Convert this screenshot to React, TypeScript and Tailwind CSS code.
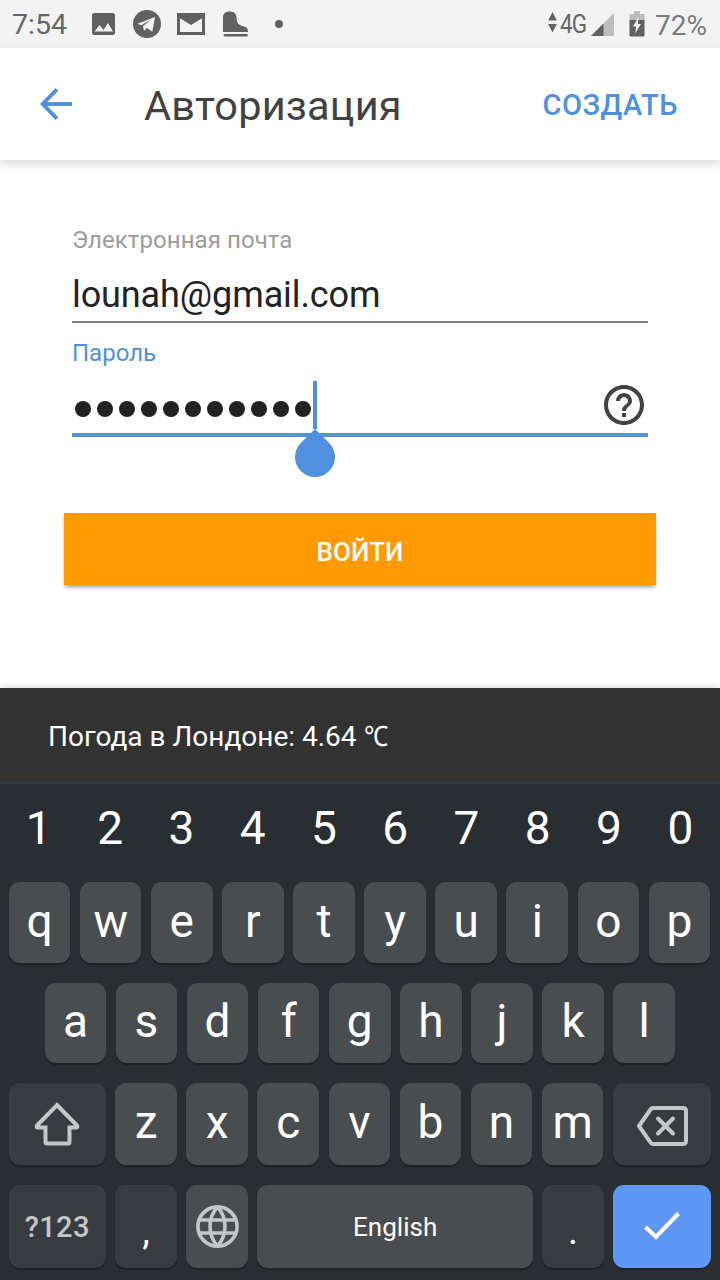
import type { ReactNode } from "react";

const digits = "1234567890".split("");
const topRow = "qwertyuiop".split("");
const homeRow = "asdfghjkl".split("");
const bottomRow = "zxcvbnm".split("");
const passwordLength = 11;

const rowClass = "flex gap-[9.5px] px-[8.8px]";

function Key({ children, className = "" }: { children: ReactNode; className?: string }) {
  return (
    <div
      className={`flex h-full items-center justify-center rounded-[11px] text-[46px] leading-none text-white shadow-[0_2px_1px_#1e2326] ${className}`}
    >
      {children}
    </div>
  );
}

function LetterKey({ letter }: { letter: string }) {
  return <Key className="w-[61.6px] shrink-0 bg-[#4a4d4f] pb-[3px]">{letter}</Key>;
}

function StatusBar() {
  return (
    <div className="flex h-12 items-center bg-[#f3f3f3] text-[#666]">
      <span className="ml-3 w-[79px] pt-[3px] text-[28.5px] leading-none">7:54</span>
      <svg className="ml-[1px] h-6 w-6 shrink-0" viewBox="0 0 24 24">
        <rect x="0" y="1" width="23" height="22" rx="2.5" fill="#616161" />
        <path d="M2.500 19.500l5-6.500 4 5 4.500-7 5 8.500z" fill="#f3f3f3" />
      </svg>
      <svg className="ml-[17px] h-7 w-7 shrink-0" viewBox="0 0 28 28">
        <circle cx="14" cy="14" r="14" fill="#616161" />
        <path d="M4.500 13.800L22 7 19.300 21.800 14 18 11 20.800 9.900 16.200 18.200 9.500 8.200 15.300z" fill="#f3f3f3" />
      </svg>
      <svg className="ml-4 h-[22px] w-7 shrink-0" viewBox="0 0 28 22">
        <path d="M0 0h28v22H0zM3 4.500v14.500h22V4.500l-11 6.500z" fill="#616161" fillRule="evenodd" />
        <path d="M3 3.300h22v2L14 12 3 5.300z" fill="#616161" />
        <path d="M3 4v3.500L14 14l11-6.500V4v15H3z" fill="#f3f3f3" />
        <path d="M4 3.500h20L14 10.500z" fill="#616161" />
      </svg>
      <svg className="ml-[18px] h-7 w-[26px] shrink-0" viewBox="0 0 26 28">
        <path d="M0 22V7C0 3.500 2.500 1.500 6.500 1.500s7 2 7 6c0 6 3 8 7.500 9 3 .7 4 2 4 5.500z" fill="#616161" />
        <path d="M2 25.300h21.500" stroke="#616161" strokeWidth="2.600" strokeLinecap="round" />
      </svg>
      <span className="ml-[26px] h-2 w-2 rounded-full bg-[#616161]" />
      <svg className="ml-[265px] h-[21px] w-[9px] shrink-0 -translate-y-[2px]" viewBox="0 0 9 21">
        <path d="M4.500 0l4.300 8.500H.2zM.2 12h8.600L4.500 20.500z" fill="#616161" />
      </svg>
      <span className="ml-[3px] w-[27px] whitespace-nowrap pt-[1px] text-[25px] leading-none tracking-[-1px]">
        <span className="inline-block origin-left scale-x-90">4G</span>
      </span>
      <svg className="ml-1 h-6 w-6 shrink-0" viewBox="0 0 24 24">
        <path d="M0 24L23 1v23z" fill="#bdbdbd" />
        <path d="M0 24L12.500 11.500V24z" fill="#616161" />
      </svg>
      <svg className="ml-[14px] h-[26px] w-4 shrink-0" viewBox="0 0 16 26">
        <path d="M5 0h6v3h3.500q1 0 1 1v6H.5V4q0-1 1-1H5z" fill="#bdbdbd" />
        <path d="M.5 9h15v15.500q0 1-1 1h-13q-1 0-1-1z" fill="#616161" />
        <path d="M9.500 6L4 15.500h3.200L6 22.500l6-9.500H8.800z" fill="#f3f3f3" />
      </svg>
      <span className="ml-[10px] whitespace-nowrap pt-[3px] text-[28px] leading-none text-[#7b7b7b]">72%</span>
    </div>
  );
}

function AppBar() {
  return (
    <header className="flex h-28 items-center bg-white shadow-[0_4px_10px_rgba(0,0,0,0.15)]">
      <svg className="ml-10 h-8 w-8 shrink-0" viewBox="0 0 32 32">
        <path d="M32 16H3M17 1.400L2.700 16 17 30.600" stroke="#4f91de" strokeWidth="3.800" fill="none" />
      </svg>
      <h1 className="ml-[72px] pt-[3px] text-[41.5px] leading-none tracking-[0.2px] text-[#424242]">Авторизация</h1>
      <button className="mr-[42px] ml-auto pt-[3px] text-[29px] leading-none font-medium tracking-[0.5px] text-[#4f91de]">СОЗДАТЬ</button>
    </header>
  );
}

function LoginForm() {
  return (
    <main className="flex h-[528px] flex-col">
      <div className="mx-[72px] flex h-[163px] flex-col border-b-2 border-[#838383] pt-[68px]">
        <label className="text-[24px] leading-6 tracking-[0.08px] text-[#9c9c9c]">Электронная почта</label>
        <span className="mt-[25px] text-[36px] leading-9 tracking-[-0.1px] text-[#222]">lounah@gmail.com</span>
      </div>
      <div className="mx-[72px] flex h-[114px] flex-col border-b-4 border-[#5592d8] pt-[18px]">
        <label className="text-[24px] leading-6 text-[#4f91de]">Пароль</label>
        <div className="relative mt-[15px] flex h-[50px] items-center">
          <div className="flex gap-[6px] pt-[7px] pl-[3px]">
            {Array.from({ length: passwordLength }, (_, i) => (
              <span key={i} className="h-4 w-4 rounded-full bg-[#212121]" />
            ))}
          </div>
          <span className="absolute top-[1px] left-[241px] h-12 w-1 bg-[#4f91de]" />
          <svg className="absolute top-[49px] left-[223px] h-12 w-10" viewBox="0 0 40 48">
            <path d="M20 0L34 13.700A20 20 0 1 1 6 13.700z" fill="#4f91de" />
          </svg>
          <svg className="mr-1 ml-auto h-10 w-10" viewBox="2 2 20 20">
            <path
              d="M11 18h2v-2h-2v2zm1-16C6.480 2 2 6.480 2 12s4.480 10 10 10 10-4.480 10-10S17.520 2 12 2zm0 18c-4.410 0-8-3.590-8-8s3.590-8 8-8 8 3.590 8 8-3.590 8-8 8zm0-14c-2.210 0-4 1.790-4 4h2c0-1.100.9-2 2-2s2 .9 2 2c0 2-3 1.750-3 5h2c0-2.250 3-2.500 3-5 0-2.210-1.790-4-4-4z"
              fill="#424242"
            />
          </svg>
        </div>
      </div>
      <button className="mx-16 mt-[76px] h-[72px] bg-[#ff9a03] pt-[6px] text-[26px] leading-none font-medium text-white shadow-[0_3px_4px_-1px_rgba(0,0,0,0.4)]">
        ВОЙТИ
      </button>
    </main>
  );
}

function Keyboard() {
  return (
    <section className="h-[498px] border-t-2 border-[#32383b] bg-[#292e32]">
      <div className="flex h-[98px] gap-[9.7px] px-[8px] pt-[2px] text-[46px] leading-[85px] text-white">
        {digits.map((d) => (
          <span key={d} className="w-[61.6px] shrink-0 text-center">{d}</span>
        ))}
      </div>
      <div className={`${rowClass} h-[80.5px]`}>
        {topRow.map((k) => <LetterKey key={k} letter={k} />)}
      </div>
      <div className="mt-5 flex h-[80.5px] gap-[9.5px] pl-[44.6px]">
        {homeRow.map((k) => <LetterKey key={k} letter={k} />)}
      </div>
      <div className={`${rowClass} mt-5 h-[81.5px]`}>
        <Key className="w-[97px] shrink-0 bg-[#383c40]">
          <svg className="h-11 w-[46px]" viewBox="0 0 46 44">
            <path d="M23 3L43 23.500q1 2-1 2h-6.500V40q0 1.500-1.500 1.500H13q-1.500 0-1.500-1.500V25.500H4q-2 0-1-2z" fill="none" stroke="#c4c6c8" strokeWidth="4" />
          </svg>
        </Key>
        {bottomRow.map((k) => <LetterKey key={k} letter={k} />)}
        <Key className="flex-1 bg-[#383c40]">
          <svg className="mt-1 h-10 w-[51px]" viewBox="0 0 51 40">
            <path d="M16 2h30q3 0 3 3v30q0 3-3 3H16q-1.500 0-2.500-1.500L2 20 13.500 3.500Q14.500 2 16 2z" fill="none" stroke="#c4c6c8" strokeWidth="4" />
            <path d="M21 12.500l15 15m0-15l-15 15" stroke="#c4c6c8" strokeWidth="4" strokeLinecap="round" />
          </svg>
        </Key>
      </div>
      <div className={`${rowClass} mt-5 h-[83px]`}>
        <Key className="w-[97px] shrink-0 bg-[#383c40]">
          <span className="pt-[2px] text-[29px] leading-none font-medium tracking-[0.4px] text-[#c4c6c8]">?123</span>
        </Key>
        <Key className="w-[61.6px] shrink-0 bg-[#383c40]">
          <span className="pt-[9px] text-[38px] leading-none">,</span>
        </Key>
        <Key className="w-[61.6px] shrink-0 bg-[#4a4d4f]">
          <svg className="h-[43px] w-[43px]" viewBox="0 0 43 43" fill="none" stroke="#c4c6c8" strokeWidth="3.600">
            <circle cx="21.500" cy="21.500" r="19.600" />
            <path d="M21.500 2q-7.500 8-7.500 19.500T21.500 41M21.500 2Q29 10 29 21.500T21.500 41M4 15h35M4 28h35" />
          </svg>
        </Key>
        <Key className="flex-1 bg-[#4a4d4f]">
          <span className="pt-[2px] text-[26px] leading-none">English</span>
        </Key>
        <Key className="w-[61.6px] shrink-0 bg-[#383c40]">
          <span className="pt-[9px] text-[38px] leading-none">.</span>
        </Key>
        <Key className="w-[97.8px] shrink-0 bg-[#5f97f6]">
          <svg className="h-7 w-[36px]" viewBox="0 0 36 28">
            <path d="M1.500 15L12 25 34.500 1.500" fill="none" stroke="#fff" strokeWidth="4" />
          </svg>
        </Key>
      </div>
    </section>
  );
}

export default function App() {
  return (
    <div className="flex h-[1280px] w-[720px] flex-col overflow-hidden bg-white font-['Roboto',sans-serif]">
      <StatusBar />
      <AppBar />
      <LoginForm />
      <div className="flex h-[94px] items-center bg-[#323232] pt-[3px] pl-12 text-[28px] leading-none whitespace-pre text-white shadow-[0_-1px_8px_rgba(0,0,0,0.15)]">
        <span>Погода в Лондоне: 4.64 </span>
        <span className="origin-left scale-x-[0.87]">℃</span>
      </div>
      <Keyboard />
    </div>
  );
}
